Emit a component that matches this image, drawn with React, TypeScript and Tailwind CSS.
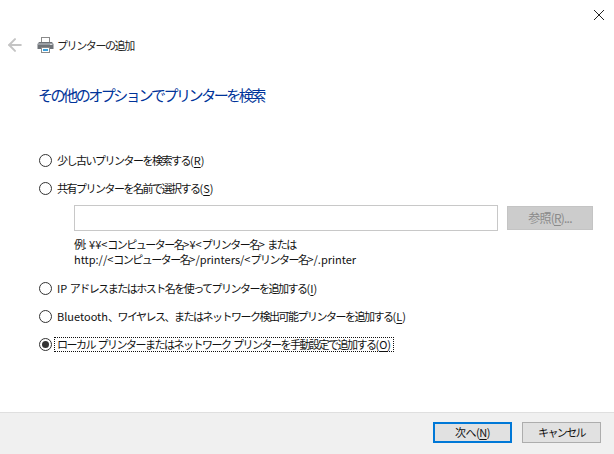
import { ArrowLeft } from 'lucide-react';

const font = { fontFamily: '"Noto Sans CJK JP", sans-serif' };

function PrinterIcon() {
  return (
    <svg width="17" height="16" viewBox="0 0 17 16" className="shrink-0">
      <rect x="4.5" y="0.5" width="8" height="5" fill="#fff" stroke="#8a8a8a" />
      <path d="M2 5h13l1.5 2v5h-16V7z" fill="#6f7378" />
      <rect x="1" y="6" width="15" height="2" fill="#9a9ea3" />
      <rect x="13" y="7" width="2" height="1" fill="#d8d8d8" />
      <rect x="4.5" y="10.5" width="8" height="5" fill="#fff" stroke="#8a8a8a" />
      <rect x="6" y="12" width="5" height="2" fill="#3aa0dc" />
    </svg>
  );
}

function Mixed({ text }: { text: string }) {
  const runs = text.split(/([\x20-\x7e¥]+)/).filter(Boolean);
  return (
    <>
      {runs.map((run, i) =>
        /^[\x20-\x7e¥]+$/.test(run) ? (
          <span key={i} className="whitespace-pre tracking-[0px]">{run}</span>
        ) : (
          <span key={i} className="tracking-[-1.5px]">{run}</span>
        ),
      )}
    </>
  );
}

function Radio({ checked }: { checked?: boolean }) {
  return (
    <span className="flex h-[13px] w-[13px] shrink-0 items-center justify-center rounded-full border border-[#333] bg-white">
      {checked && <span className="h-[7px] w-[7px] rounded-full bg-[#333]" />}
    </span>
  );
}

function Option({ label, accel, checked }: { label: string; accel: string; checked?: boolean }) {
  return (
    <div className="flex h-[18px] items-center">
      <Radio checked={checked} />
      <span
        className={`ml-[3px] whitespace-nowrap px-[2px] text-[11px] leading-[13px] text-[#111] ${
          checked ? 'outline-1 outline-dotted outline-[#111]' : ''
        }`}
      >
        <Mixed text={label} />
        (<span className="underline underline-offset-2">{accel}</span>)
      </span>
    </div>
  );
}

export default function App() {
  return (
    <div className="flex h-[454px] w-[614px] flex-col overflow-hidden bg-white" style={font}>
      <div className="flex h-[30px] items-start justify-end">
        <svg width="12" height="12" viewBox="0 0 12 12" className="mr-[9px] mt-[9px]">
          <path d="M1 1l10 10M11 1L1 11" stroke="#222" strokeWidth="1" fill="none" />
        </svg>
      </div>
      <div className="mt-[7px] flex h-[16px] items-center pl-[5px]">
        <ArrowLeft size={20} strokeWidth={2.4} className="text-[#c4c4c4]" />
        <span className="ml-[12px]"><PrinterIcon /></span>
        <span className="ml-[3px] whitespace-nowrap text-[11px] leading-[16px] tracking-[-1.4px] text-[#222]">
          プリンターの追加
        </span>
      </div>
      <h1 className="ml-[38px] mt-[30px] whitespace-nowrap text-[15px] font-normal leading-[24px] tracking-[-2.45px] text-[#003399]">
        その他のオプションでプリンターを検索
      </h1>
      <div className="ml-[39px] mt-[44px]">
        <Option label="少し古いプリンターを検索する" accel="R" />
        <div className="mt-[10px]">
          <Option label="共有プリンターを名前で選択する" accel="S" />
        </div>
        <div className="ml-[35px] mt-[8px] flex items-start">
          <div className="h-[26px] w-[424px] border border-[#c8c8c8] bg-white" />
          <div className="ml-[9px] mt-[1px] flex h-[24px] w-[86px] items-center justify-center border border-[#c4c4c4] bg-[#cccccc] text-[12px] tracking-[-0.8px] text-[#8a8a8a]">
            参照(<span className="underline underline-offset-2">R</span>)...
          </div>
        </div>
        <p className="ml-[35px] mt-[6px] whitespace-nowrap text-[11px] leading-[15px] text-[#111]">
          <Mixed text="例: ¥¥<コンピューター名>¥<プリンター名> または" />
          <br />
          <Mixed text="http://<コンピューター名>/printers/<プリンター名>/.printer" />
        </p>
        <div className="mt-[12px]">
          <Option label="IP アドレスまたはホスト名を使ってプリンターを追加する" accel="I" />
        </div>
        <div className="mt-[10px]">
          <Option label="Bluetooth、ワイヤレス、またはネットワーク検出可能プリンターを追加する" accel="L" />
        </div>
        <div className="mt-[10px]">
          <Option checked label="ローカル プリンターまたはネットワーク プリンターを手動設定で追加する" accel="O" />
        </div>
      </div>
      <div className="mt-auto flex h-[42px] items-start justify-end gap-[10px] border-t border-[#dfdfdf] bg-[#f0f0f0] pr-[13px] pt-[9px]">
        <div className="flex h-[21px] w-[79px] items-center justify-center border-2 border-[#0078d7] bg-[#e1e1e1] text-[11px] tracking-[-0.5px] text-[#111]">
          次へ(<span className="underline underline-offset-2">N</span>)
        </div>
        <div className="flex h-[21px] w-[79px] items-center justify-center border border-[#adadad] bg-[#e1e1e1] text-[11px] tracking-[-1.6px] text-[#111]">
          キャンセル
        </div>
      </div>
    </div>
  );
}
